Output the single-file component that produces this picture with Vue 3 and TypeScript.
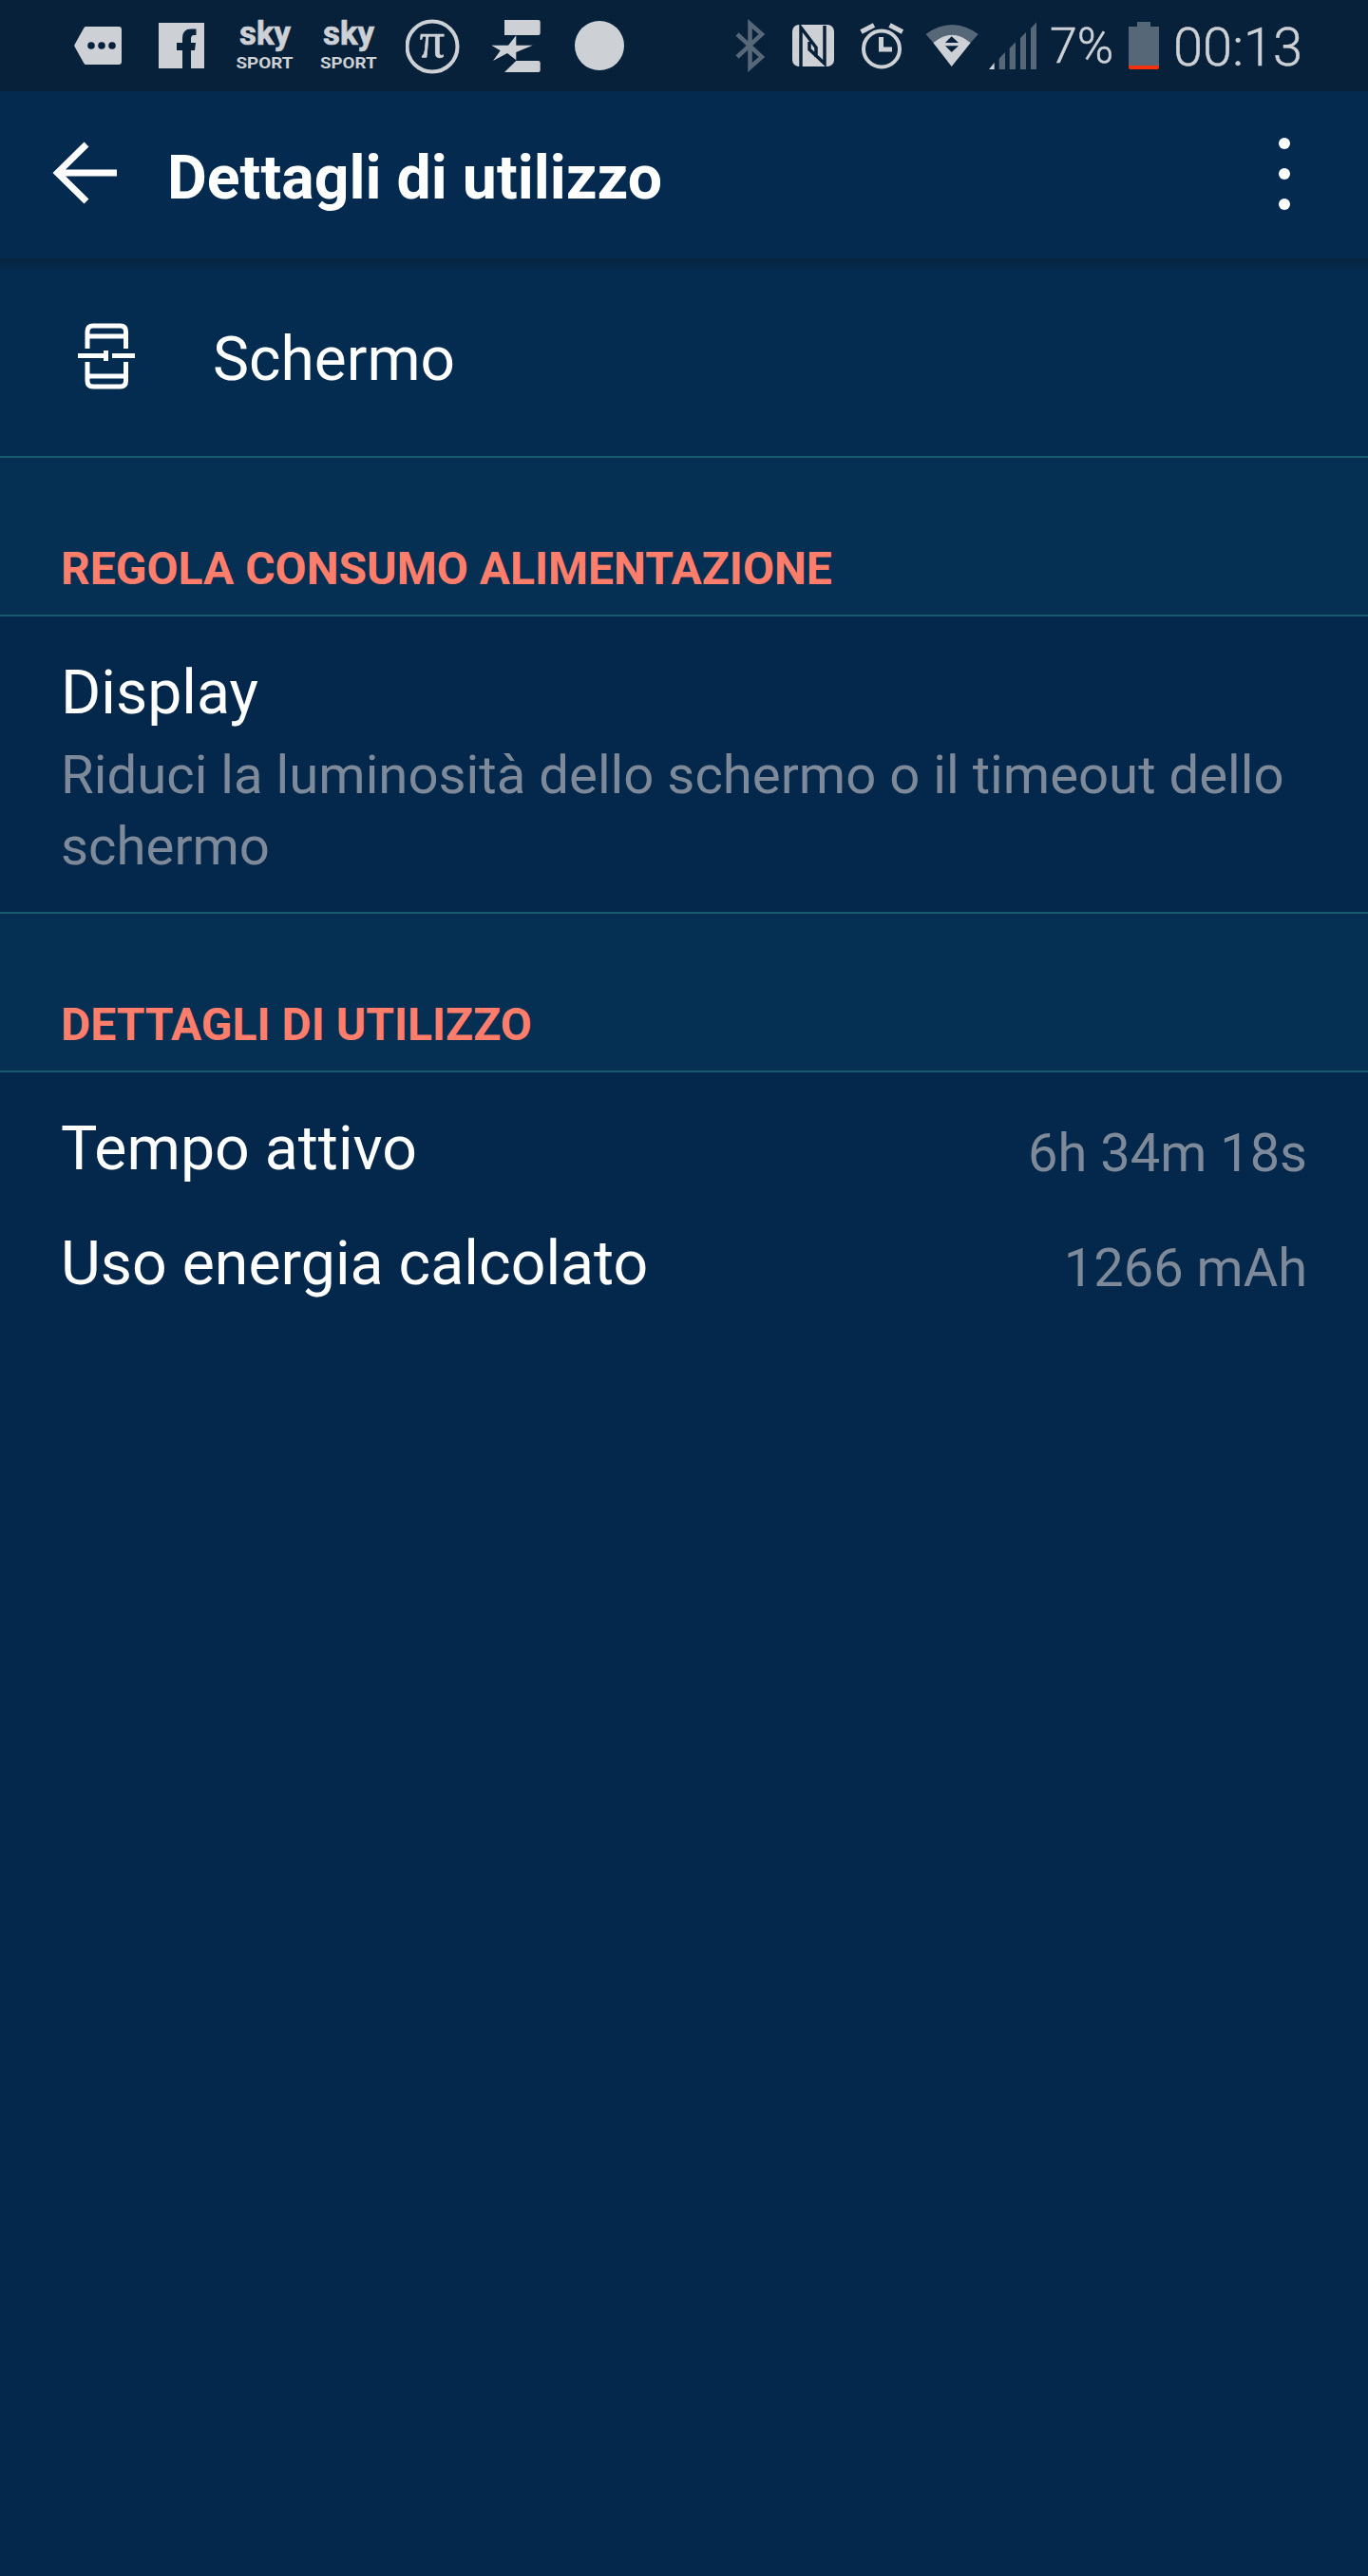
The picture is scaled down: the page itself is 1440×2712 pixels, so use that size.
<script setup lang="ts">
const rows: { label: string; value: string }[] = [
  { label: 'Tempo attivo', value: '6h 34m 18s' },
  { label: 'Uso energia calcolato', value: '1266 mAh' },
]
</script>

<template>
  <div class="page">
    <div class="status">
      <svg class="i msg" width="51" height="96" viewBox="78 0 51 96">
        <path fill="#cdd1d6" d="M90 28H125Q128 28 128 31V65Q128 68 125 68H90Q89 68 88 66L78.500 49Q78 48 78.500 47L88 30Q89 28 90 28Z" />
        <circle cx="96" cy="48" r="3.800" fill="#08213a" />
        <circle cx="107" cy="48" r="3.800" fill="#08213a" />
        <circle cx="118" cy="48" r="3.800" fill="#08213a" />
      </svg>
      <svg class="i fb" width="48" height="96" viewBox="167 0 48 96">
        <path fill="#cdd1d6" d="M167 24H215V72H201V53H205L206 45H201V41Q201 37 204 37H206.500V30.500H201Q192 30.500 192 40V45H186V53H192V72H167Z" />
      </svg>
      <svg class="i sky" width="61" height="96" viewBox="248 0 61 96">
        <text x="252" y="47" class="skyw" textLength="54" lengthAdjust="spacingAndGlyphs">sky</text>
        <text x="248.500" y="72" class="spt" textLength="60" lengthAdjust="spacingAndGlyphs">SPORT</text>
      </svg>
      <svg class="i sky2" width="60" height="96" viewBox="337 0 60 96">
        <text x="340" y="47" class="skyw" textLength="54" lengthAdjust="spacingAndGlyphs">sky</text>
        <text x="337" y="72" class="spt" textLength="59.500" lengthAdjust="spacingAndGlyphs">SPORT</text>
      </svg>
      <svg class="i pi" width="57" height="96" viewBox="427 0 57 96">
        <circle cx="455" cy="49" r="26.500" fill="none" stroke="#cdd1d6" stroke-width="4" />
        <text x="455" y="60" text-anchor="middle" class="pig">π</text>
      </svg>
      <svg class="i euro" width="53" height="96" viewBox="516 0 53 96">
        <path fill="#cdd1d6" d="M531 21H566.500Q568.700 21 568.700 23V35Q568.700 37 566.500 37H531ZM517.300 47.700H535L543.300 37.300V47.700H560.700L543.300 55V63.300L534 56L519 64L526.700 53.300ZM543.300 64H566.500Q568.700 64 568.700 66V74Q568.700 76 566.500 76H531Z" />
      </svg>
      <svg class="i dot" width="52" height="96" viewBox="605 0 52 96">
        <circle cx="631" cy="48" r="26" fill="#cdd1d6" />
      </svg>

      <svg class="i bt" width="31" height="96" viewBox="774 0 31 96">
        <path fill="none" stroke="#566877" stroke-width="4.500" d="M776 36L802 60L789.500 71V25L802 36L776 60" />
      </svg>
      <svg class="i nfc" width="44" height="96" viewBox="834 0 44 96">
        <rect x="834" y="26" width="44" height="44" rx="7" fill="#cdd1d6" />
        <path fill="none" stroke="#08213a" stroke-width="3.500" d="M843 70V29L859 50V60M852 44V52L868 67V27" />
      </svg>
      <svg class="i alarm" width="46" height="96" viewBox="905 0 46 96">
        <circle cx="928" cy="51.500" r="19" fill="none" stroke="#cdd1d6" stroke-width="4" />
        <path fill="none" stroke="#cdd1d6" stroke-width="5" d="M927.500 39V52H939M906.500 33.500L920 26.500M950 33.500L936.500 26.500" />
      </svg>
      <svg class="i wifi" width="56" height="96" viewBox="974 0 56 96">
        <path fill="#566877" d="M974.500 36Q1002 16 1029.700 36L1021.700 45Q1002 28.400 982.300 45Z" />
        <path fill="#cdd1d6" fill-rule="evenodd" d="M982.300 45Q1002 28.400 1021.700 45L1001.700 70ZM1001.700 38.300L995 45H1009ZM995 48.300L1001.700 55L1009 48.300Z" />
      </svg>
      <svg class="i signal" width="51" height="96" viewBox="1041 0 51 96">
        <path fill="#cdd1d6" d="M1041 73L1046.700 66V73Z" />
        <path fill="#566877" d="M1051.700 73V61.700L1058 55V73ZM1062.700 73V50.700L1069 44.300V73ZM1074 73V40L1080 34V73ZM1085 73V30L1091 23.300V73Z" />
      </svg>
      <span class="pct">7%</span>
      <svg class="i batt" width="32" height="96" viewBox="1188 0 32 96">
        <path fill="#566877" d="M1197 23H1211V28H1220V69H1188V28H1197Z" />
        <path fill="#f4320c" d="M1188 69H1220V71Q1220 73 1218 73H1190Q1188 73 1188 71Z" />
      </svg>
      <span class="clock">00:13</span>
    </div>

    <header class="bar">
      <svg class="back" width="68" height="66" viewBox="55 149 68 66">
        <path fill="none" stroke="#fff" stroke-width="7" d="M91 152L60.500 182L91 212M60.500 182H123" />
      </svg>
      <h1 class="title">Dettagli di utilizzo</h1>
      <div class="more"><i></i><i></i><i></i></div>
    </header>

    <div class="screen-row">
      <div class="shadow"></div>
      <svg class="phone" width="60" height="72" viewBox="82 340 60 72">
        <path fill="none" stroke="#fff" stroke-width="5" d="M92 368V350Q92 344 98 344H126.500Q132.500 344 132.500 350V368M92 382V402Q92 408 98 408H126.500Q132.500 408 132.500 402V382M92 355H132.500M92 397H132.500M82 375.500H114M118 375.500H142" />
        <path fill="#fff" d="M109 370H114V381H109Z" />
      </svg>
      <span class="screen-label">Schermo</span>
    </div>

    <section class="head"><span>REGOLA CONSUMO ALIMENTAZIONE</span></section>

    <div class="display">
      <div class="big">Display</div>
      <div class="sub">Riduci la luminosità dello schermo o il timeout dello schermo</div>
    </div>

    <section class="head"><span>DETTAGLI DI UTILIZZO</span></section>

    <div class="usage">
      <div v-for="r in rows" :key="r.label" class="row">
        <span class="big">{{ r.label }}</span>
        <span class="val">{{ r.value }}</span>
      </div>
    </div>
  </div>
</template>

<style>
html, body { margin: 0; background: #04284b; }
</style>

<style scoped>
.page {
  width: 1440px;
  height: 2712px;
  background: #04284b;
  font-family: Roboto, "Liberation Sans", sans-serif;
  overflow: hidden;
}
.status {
  height: 96px;
  background: #08213a;
  display: flex;
  align-items: flex-start;
  padding-left: 78px;
  color: #cdd1d6;
}
.i { display: block; flex: none; }
.fb { margin-left: 38px; }
.sky { margin-left: 33px; }
.sky2 { margin-left: 28px; }
.pi { margin-left: 30px; }
.euro { margin-left: 32px; }
.dot { margin-left: 36px; }
.bt { margin-left: 117px; }
.nfc { margin-left: 29px; }
.alarm { margin-left: 27px; }
.wifi { margin-left: 23px; }
.signal { margin-left: 11px; }
.batt { margin-left: 18px; }
.skyw { font: 700 35px Roboto, sans-serif; fill: #cdd1d6; stroke: #cdd1d6; stroke-width: 0.7px; }
.spt { font: 700 16px Roboto, sans-serif; fill: #cdd1d6; }
.pig { font: 400 52px "Liberation Serif", serif; fill: #cdd1d6; stroke: #cdd1d6; stroke-width: 0.6px; }
.pct {
  margin-left: 13px;
  width: 65px;
  font-weight: 300;
  font-size: 52px;
  line-height: 98px;
  height: 96px;
  flex: none;
  -webkit-text-stroke: 0.5px #cdd1d6;
}
.clock {
  margin-left: 15px;
  font-weight: 300;
  font-size: 56px;
  line-height: 100px;
  height: 96px;
  flex: none;
  -webkit-text-stroke: 0.5px #cdd1d6;
}
.bar {
  height: 176px;
  background: #042a4f;
  display: flex;
  align-items: center;
  padding-left: 55px;
}
.back { flex: none; display: block; margin-top: -4px; }
.title {
  margin: 7px 0 0 53px;
  font-size: 64.4px;
  font-weight: 700;
  color: #fff;
  line-height: 1;
  flex: 1;
}
.more {
  display: flex;
  flex-direction: column;
  gap: 20px;
  margin-right: 82px;
  margin-top: -2px;
}
.more i { display: block; width: 12px; height: 12px; border-radius: 50%; background: #fff; }
.screen-row {
  position: relative;
  height: 210px;
  background: #042c50;
  display: flex;
  align-items: center;
  padding: 0 0 2px 82px;
  box-sizing: border-box;
  border-bottom: 2px solid #1a5a6e;
}
.shadow {
  position: absolute;
  left: 0;
  right: 0;
  top: 0;
  height: 14px;
  background: linear-gradient(#07243f, #042c5000);
}
.phone { flex: none; display: block; }
.screen-label { margin-left: 82px; font-size: 64px; color: #fff; margin-top: 7px; }
.head {
  background: #052f53;
  height: 167px;
  box-sizing: border-box;
  border-bottom: 2px solid #1a5a6e;
  display: flex;
  align-items: flex-end;
  padding: 0 0 24px 64px;
  color: #ff7e6b;
  font-size: 48px;
  font-weight: 700;
  line-height: 48px;
}
.display {
  height: 313px;
  box-sizing: border-box;
  padding: 45px 64px 0 64px;
  border-bottom: 2px solid #1a5a6e;
}
.big { font-size: 64.4px; color: #fff; line-height: 70px; }
.sub { font-size: 56.3px; color: #7e8a99; line-height: 75px; margin-top: 15px; }
.usage { padding: 45px 64px 0 64px; }
.row { display: flex; justify-content: space-between; height: 121px; align-items: flex-start; }
.val { font-size: 56px; line-height: 70px; color: #7e8a99; margin-top: 5px; }
</style>
